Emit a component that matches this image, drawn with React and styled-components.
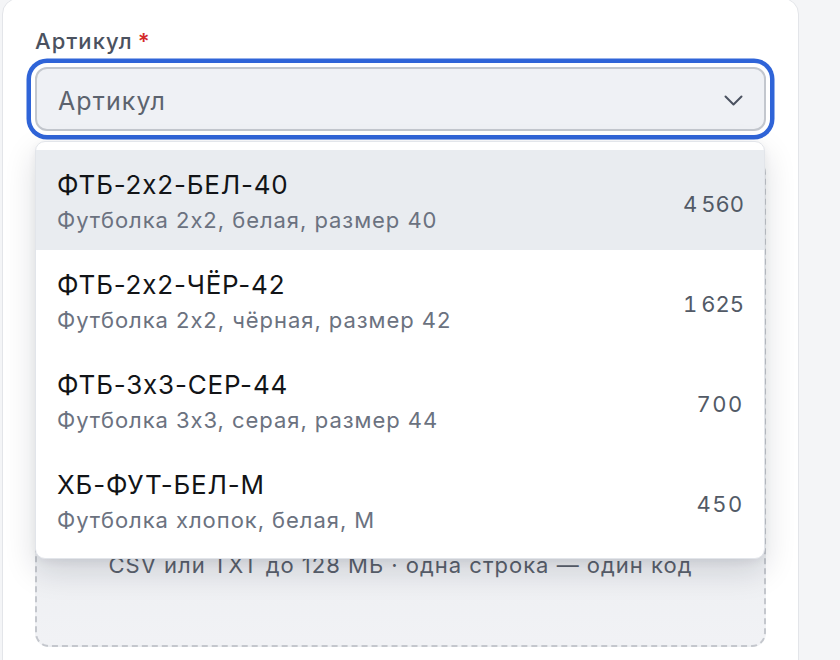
import React from "react";
import styled, { createGlobalStyle } from "styled-components";

const Global = createGlobalStyle`
  html, body { margin: 0; padding: 0; background: #f4f5f7; }
  body { font-family: Inter, "Noto Sans", "DejaVu Sans", sans-serif; -webkit-font-smoothing: antialiased; }
  #root { min-height: 660px; overflow: hidden; }
`;

const Page = styled.div`
  height: 660px;
  overflow: hidden;
  padding-left: 2px;
`;

const Card = styled.div`
  width: 797px;
  box-sizing: border-box;
  margin-top: -2px;
  background: #fff;
  border: 1px solid #e3e5e9;
  border-radius: 16px;
  padding: 28px 32px 40px;
`;

const Form = styled.div`
  display: flex;
  flex-direction: column;
  gap: 28px;
`;

const Field = styled.div`
  position: relative;
  display: flex;
  flex-direction: column;
  gap: 12px;
`;

const Label = styled.label`
  font-size: 22px;
  line-height: 28px;
  font-weight: 500;
  letter-spacing: 1.1px;
  color: #4b5260;
  display: flex;
  gap: 5px;
`;

const Required = styled.span`
  color: #d42a2a;
  font-weight: 600;
`;

const SelectBox = styled.button`
  all: unset;
  box-sizing: border-box;
  height: 64px;
  display: flex;
  align-items: center;
  justify-content: space-between;
  padding: 3px 21px 0 21px;
  background: #eff1f5;
  border: 2px solid #c3c7ce;
  border-radius: 12px;
  box-shadow: 0 0 0 4px #ffffff, 0 0 0 8.5px #2f64d8;
  font-size: 25px;
  letter-spacing: 1.1px;
  color: #5c636e;
  font-family: inherit;
`;

const Chevron = () => (
  <svg width="19" height="11" viewBox="0 0 19 11" fill="none">
    <polyline points="1.5,1.5 9.5,9.5 17.5,1.5" stroke="#4b5260" strokeWidth="2" strokeLinecap="round" strokeLinejoin="round" />
  </svg>
);

const Menu = styled.ul`
  position: absolute;
  top: 114px;
  left: 0;
  right: 1px;
  margin: 0;
  padding: 8px 0;
  list-style: none;
  background: #fff;
  border: 1px solid #e2e5ea;
  border-radius: 10px;
  box-shadow: 0 12px 32px rgba(17, 24, 39, 0.14), 0 3px 8px rgba(17, 24, 39, 0.06);
  z-index: 10;
`;

const Option = styled.li`
  height: 100px;
  box-sizing: border-box;
  display: flex;
  align-items: center;
  justify-content: space-between;
  padding: 2px 21px 0 21px;
  background: ${(p) => (p.$active ? "#e9ecf0" : "transparent")};
`;

const OptionText = styled.div`
  display: flex;
  flex-direction: column;
  gap: 5px;
`;

const Code = styled.div`
  font-size: 26px;
  line-height: 32px;
  letter-spacing: 0.8px;
  color: #121417;
`;

const Desc = styled.div`
  font-size: 22px;
  line-height: 28px;
  letter-spacing: 0.95px;
  color: #6b7280;
`;

const Qty = styled.div`
  font-size: 22px;
  line-height: 28px;
  letter-spacing: 1.6px;
  margin-right: -1px;
  color: #525a66;
  margin-top: 5px;
  font-variant-numeric: tabular-nums;
`;

const Dropzone = styled.div`
  box-sizing: border-box;
  display: flex;
  flex-direction: column;
  align-items: center;
  justify-content: flex-end;
  gap: 16px;
  height: 488px;
  padding: 0 24px 66px;
  border: 2px dashed #c4c7cd;
  border-radius: 14px;
  background: linear-gradient(180deg, #eceef1 70%, #f1f2f5 100%);
`;

const UploadIcon = () => (
  <svg width="40" height="40" viewBox="0 0 24 24" fill="none" stroke="#8a9099" strokeWidth="1.8" strokeLinecap="round" strokeLinejoin="round">
    <path d="M21 15v4a2 2 0 0 1-2 2H5a2 2 0 0 1-2-2v-4" />
    <polyline points="17 8 12 3 7 8" />
    <line x1="12" y1="3" x2="12" y2="15" />
  </svg>
);

const DropHint = styled.div`
  font-size: 22px;
  line-height: 28px;
  letter-spacing: 1px;
  color: #5a616c;
`;

const items = [
  { code: "ФТБ-2x2-БЕЛ-40", desc: "Футболка 2x2, белая, размер 40", qty: "4\u202F560" },
  { code: "ФТБ-2x2-ЧЁР-42", desc: "Футболка 2x2, чёрная, размер 42", qty: "1\u202F625" },
  { code: "ФТБ-3x3-СЕР-44", desc: "Футболка 3x3, серая, размер 44", qty: "700" },
  { code: "ХБ-ФУТ-БЕЛ-М", desc: "Футболка хлопок, белая, М", qty: "450" },
];

export default function App() {
  return (
    <>
      <Global />
      <Page>
        <Card>
          <Form>
            <Field>
              <Label>
                Артикул<Required>*</Required>
              </Label>
              <SelectBox>
                <span>Артикул</span>
                <Chevron />
              </SelectBox>
              <Menu>
                {items.map((it, i) => (
                  <Option key={it.code} $active={i === 0}>
                    <OptionText>
                      <Code>{it.code}</Code>
                      <Desc>{it.desc}</Desc>
                    </OptionText>
                    <Qty>{it.qty}</Qty>
                  </Option>
                ))}
              </Menu>
            </Field>
            <Dropzone>
              <UploadIcon />
              <DropHint>CSV или TXT до 128 МБ · одна строка — один код</DropHint>
            </Dropzone>
          </Form>
        </Card>
      </Page>
    </>
  );
}
